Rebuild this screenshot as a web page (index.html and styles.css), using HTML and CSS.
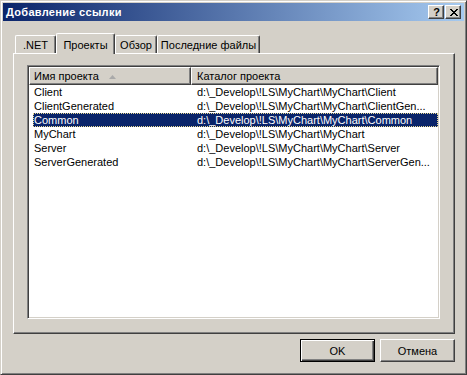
FILE: index.html
```html
<!DOCTYPE html>
<html>

<head>
	<meta charset="utf-8">
	<title>Добавление ссылки</title>
	<link rel="stylesheet" href="styles.css">
</head>

<body>
	<div class="window">
		<div class="titlebar">
			<span class="title">Добавление ссылки</span>
			<div class="caption_buttons">
				<div class="cap_btn help">?</div>
				<div class="cap_btn close">
					<svg width="8" height="7" viewBox="0 0 8 7">
						<path d="M0 0h2v1h-2zM6 0h2v1h-2zM1 1h2v1h-2zM5 1h2v1h-2zM2 2h4v1h-4zM3 3h2v1h-2zM2 4h4v1h-4zM1 5h2v1h-2zM5 5h2v1h-2zM0 6h2v1h-2zM6 6h2v1h-2z" fill="#000" />
					</svg>
				</div>
			</div>
		</div>

		<div class="client">
			<div class="tabs">
				<div class="tab tab_net">.NET</div>
				<div class="tab tab_active">Проекты</div>
				<div class="tab tab_browse">Обзор</div>
				<div class="tab tab_recent">Последние файлы</div>
			</div>

			<div class="panel">
				<div class="listview">
					<div class="lv_header">
						<div class="lv_col col_name">Имя проекта
							<svg class="sort_arrow" width="7" height="4" viewBox="0 0 7 4">
								<path d="M3.5 0L7 4H0z" fill="#a9a9a9" />
							</svg>
						</div>
						<div class="lv_col col_path">Каталог проекта</div>
					</div>
					<div class="lv_body">
						<div class="lv_row"><span class="cell_name">Client</span><span class="cell_path">d:\_Develop\!LS\MyChart\MyChart\Client</span></div>
						<div class="lv_row"><span class="cell_name">ClientGenerated</span><span class="cell_path">d:\_Develop\!LS\MyChart\MyChart\ClientGen...</span></div>
						<div class="lv_row selected"><span class="cell_name">Common</span><span class="cell_path">d:\_Develop\!LS\MyChart\MyChart\Common</span></div>
						<div class="lv_row"><span class="cell_name">MyChart</span><span class="cell_path">d:\_Develop\!LS\MyChart\MyChart</span></div>
						<div class="lv_row"><span class="cell_name">Server</span><span class="cell_path">d:\_Develop\!LS\MyChart\MyChart\Server</span></div>
						<div class="lv_row"><span class="cell_name">ServerGenerated</span><span class="cell_path">d:\_Develop\!LS\MyChart\MyChart\ServerGen...</span></div>
					</div>
				</div>
			</div>

			<div class="buttons">
				<div class="btn btn_default">OK</div>
				<div class="btn">Отмена</div>
			</div>
		</div>
	</div>
</body>

</html>
```

FILE: styles.css
```css
body {
	margin: 0;
	background-color: #D4D0C8;
	color: #000000;
	font-family: "Liberation Sans", Arial, sans-serif;
	font-size: 11px;
}

.window {
	width: 467px;
	height: 375px;
	box-sizing: border-box;
	padding: 2px;
	border: 1px solid;
	border-color: #D4D0C8 #404040 #404040 #D4D0C8;
	box-shadow: inset 1px 1px #FFFFFF, inset -1px -1px #808080;
	background-color: #D4D0C8;
	display: flex;
	flex-direction: column;
}

/* Title bar */
.titlebar {
	height: 18px;
	display: flex;
	align-items: center;
	justify-content: space-between;
	padding: 0 3px 0 3px;
	background: linear-gradient(to right, #0A246A, #A6CAF0);
}

.title {
	color: #FFFFFF;
	font-weight: bold;
	font-size: 11px;
	letter-spacing: 0.3px;
}

.caption_buttons {
	display: flex;
	gap: 1px;
}

.cap_btn {
	width: 16px;
	height: 14px;
	box-sizing: border-box;
	border: 1px solid;
	border-color: #FFFFFF #404040 #404040 #FFFFFF;
	box-shadow: inset -1px -1px #808080;
	background-color: #D4D0C8;
	display: flex;
	align-items: center;
	justify-content: center;
}

.help {
	font-weight: bold;
	font-size: 11px;
	line-height: 12px;
	padding-left: 1px;
}

.close svg {
	display: block;
	margin-left: 1px;
}

/* Client area */
.client {
	flex: 1;
	padding: 12px 9px 0 10px;
	display: flex;
	flex-direction: column;
}

.tabs {
	height: 20px;
	padding-left: 2px;
	display: flex;
	align-items: flex-end;
}

.tab {
	height: 18px;
	box-sizing: border-box;
	border-top: 1px solid #FFFFFF;
	border-left: 1px solid #FFFFFF;
	border-right: 1px solid #404040;
	border-radius: 2px 2px 0 0;
	box-shadow: inset -1px 0 #808080;
	background-color: #D4D0C8;
	text-align: center;
	line-height: 14px;
	padding-top: 2px;
}

.tab_net {
	width: 41px;
}

.tab_active {
	width: 59px;
	height: 21px;
	margin-bottom: -1px;
	padding-top: 4px;
	position: relative;
	z-index: 1;
}

.tab_browse {
	width: 42px;
}

.tab_recent {
	width: 103px;
}

.panel {
	height: 281px;
	box-sizing: border-box;
	border: 1px solid;
	border-color: #FFFFFF #404040 #404040 #FFFFFF;
	box-shadow: inset -1px -1px #808080;
	padding: 11px 14px 14px 13px;
	display: flex;
	flex-direction: column;
}

/* List view */
.listview {
	flex: 1;
	border: 1px solid;
	border-color: #808080 #FFFFFF #FFFFFF #808080;
	box-shadow: inset 1px 1px #404040, inset -1px -1px #D4D0C8;
	padding: 1px;
	background-color: #FFFFFF;
}

.lv_header {
	display: flex;
	height: 18px;
}

.lv_col {
	box-sizing: border-box;
	height: 18px;
	border: 1px solid;
	border-color: #FFFFFF #404040 #404040 #FFFFFF;
	box-shadow: inset -1px -1px #808080;
	background-color: #D4D0C8;
	line-height: 15px;
	display: flex;
	align-items: center;
	white-space: nowrap;
}

.col_name {
	width: 162px;
	padding-left: 4px;
}

.col_path {
	flex: 1;
	padding-left: 5px;
}

.sort_arrow {
	margin-left: 10px;
	margin-top: 1px;
}

.lv_body {
	padding-left: 4px;
}

.lv_row {
	height: 14px;
	line-height: 14px;
	display: flex;
	white-space: nowrap;
}

.cell_name {
	width: 157px;
	padding-left: 1px;
}

.cell_path {
	padding-left: 6px;
}

.lv_row.selected {
	background-color: #0A246A;
	color: #FFFFFF;
	outline: 1px dotted #E8D890;
	outline-offset: -1px;
}

/* Dialog buttons */
.buttons {
	margin-top: 5px;
	display: flex;
	justify-content: flex-end;
	gap: 5px;
}

.btn {
	width: 75px;
	height: 23px;
	box-sizing: border-box;
	border: 1px solid;
	border-color: #FFFFFF #404040 #404040 #FFFFFF;
	box-shadow: inset -1px -1px #808080;
	background-color: #D4D0C8;
	display: flex;
	align-items: center;
	justify-content: center;
}

.btn_default {
	border-color: #000000;
	box-shadow: inset 1px 1px #FFFFFF, inset -1px -1px #404040, inset -2px -2px #808080;
}
```
